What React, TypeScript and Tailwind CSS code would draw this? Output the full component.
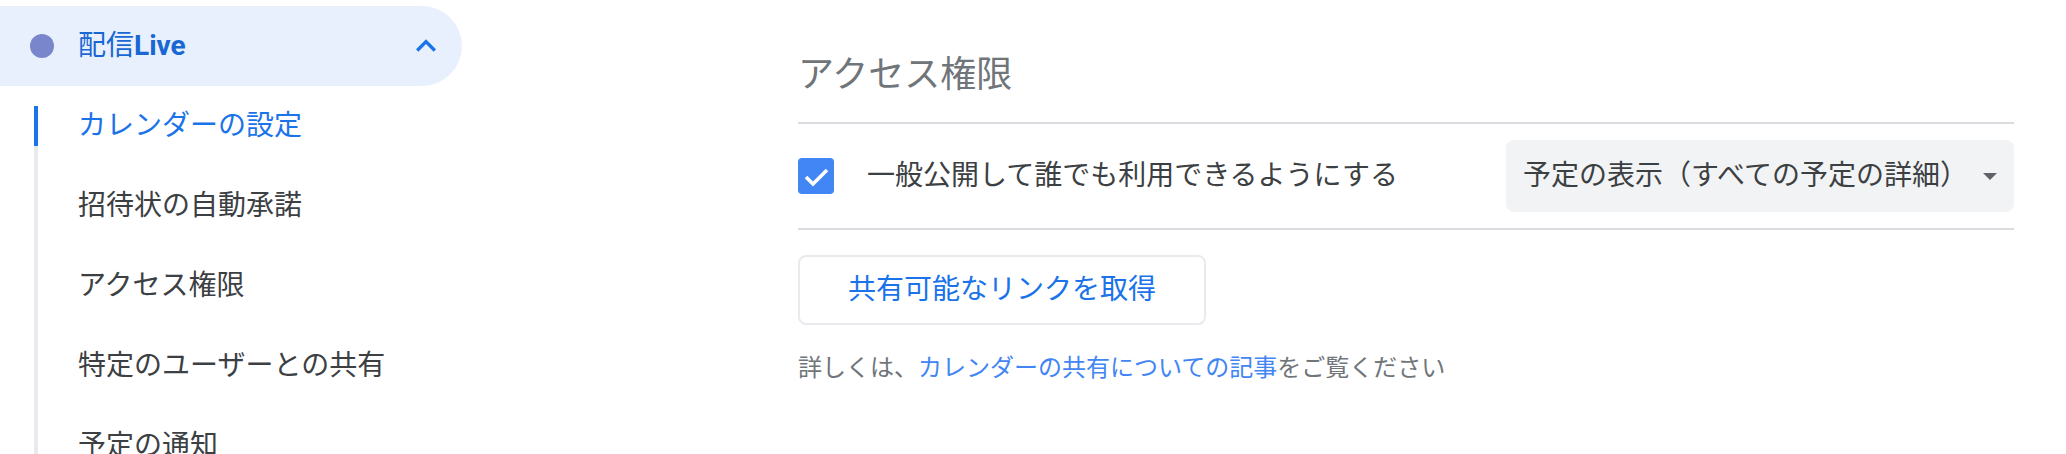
const font = { fontFamily: 'Roboto, "Noto Sans CJK JP", sans-serif' };

const items = ["カレンダーの設定", "招待状の自動承諾", "アクセス権限", "特定のユーザーとの共有", "予定の通知"];

function SideNav() {
  return (
    <aside className="w-[462px] shrink-0 pt-[6px]">
      <div className="flex h-[80px] items-center rounded-r-full bg-[#e8f0fe] pl-[30px] pr-[16px]">
        <span className="h-[24px] w-[24px] rounded-full bg-[#7986cb]" />
        <span className="ml-[24px] text-[28px] leading-[28px] text-[#1967d2]">
          配信<span className="font-bold">Live</span>
        </span>
        <svg viewBox="0 0 24 24" className="ml-auto h-[40px] w-[40px] fill-[#1a73e8]">
          <path d="M12 8l-6 6 1.41 1.41L12 10.83l4.59 4.58L18 14z" />
        </svg>
      </div>
      <ul className="ml-[34px]">
        {items.map((label, i) => (
          <li key={label} className="flex h-[80px]">
            {i === 0 ? (
              <div className="flex w-[4px] flex-col">
                <div className="h-[20px]" />
                <div className="h-[40px] bg-[#1a73e8]" />
                <div className="flex-1 bg-[#e8eaed]" />
              </div>
            ) : (
              <div className="w-[4px] bg-[#e8eaed]" />
            )}
            <span
              className={
                "flex items-center pl-[40px] text-[28px] " +
                (i === 0 ? "text-[#1a73e8]" : "text-[#3c4043]")
              }
            >
              {label}
            </span>
          </li>
        ))}
      </ul>
    </aside>
  );
}

function Checkbox() {
  return (
    <span className="flex h-[36px] w-[36px] shrink-0 items-center justify-center rounded-[4px] bg-[#4285f4]">
      <svg viewBox="0 0 36 36" className="h-[36px] w-[36px]">
        <polyline points="8,19 15,26 29,12" fill="none" stroke="white" strokeWidth="3.6" />
      </svg>
    </span>
  );
}

export default function App() {
  return (
    <div className="flex h-[454px] w-full overflow-hidden bg-white" style={font}>
      <SideNav />
      <main className="ml-[336px] mr-[52px] flex-1">
        <h2 className="pt-[57px] text-[36px] leading-[36px] text-[#70757a]">アクセス権限</h2>
        <div className="mt-[29px] h-[2px] bg-[#dadce0]" />
        <div className="flex h-[104px] items-center">
          <Checkbox />
          <span className="ml-[33px] text-[28px] text-[#3c4043]">一般公開して誰でも利用できるようにする</span>
          <div className="ml-auto flex h-[72px] w-[508px] items-center justify-between rounded-lg bg-[#f1f3f4] pl-[17px] pr-[17px]">
            <span className="text-[28px] text-[#3c4043]">予定の表示（すべての予定の詳細）</span>
            <svg viewBox="0 0 14 7" className="h-[7px] w-[14px] fill-[#5f6368]">
              <path d="M0 0h14L7 7z" />
            </svg>
          </div>
        </div>
        <div className="h-[2px] bg-[#dadce0]" />
        <button className="mt-[25px] flex h-[70px] w-[408px] items-center justify-center rounded-lg border-2 border-[#e8eaed] text-[28px] text-[#1a73e8]">
          共有可能なリンクを取得
        </button>
        <p className="mt-[29px] text-[24px] leading-[28px] text-[#70757a]">
          詳しくは、<span className="text-[#4285f4]">カレンダーの共有についての記事</span>をご覧ください
        </p>
      </main>
    </div>
  );
}
